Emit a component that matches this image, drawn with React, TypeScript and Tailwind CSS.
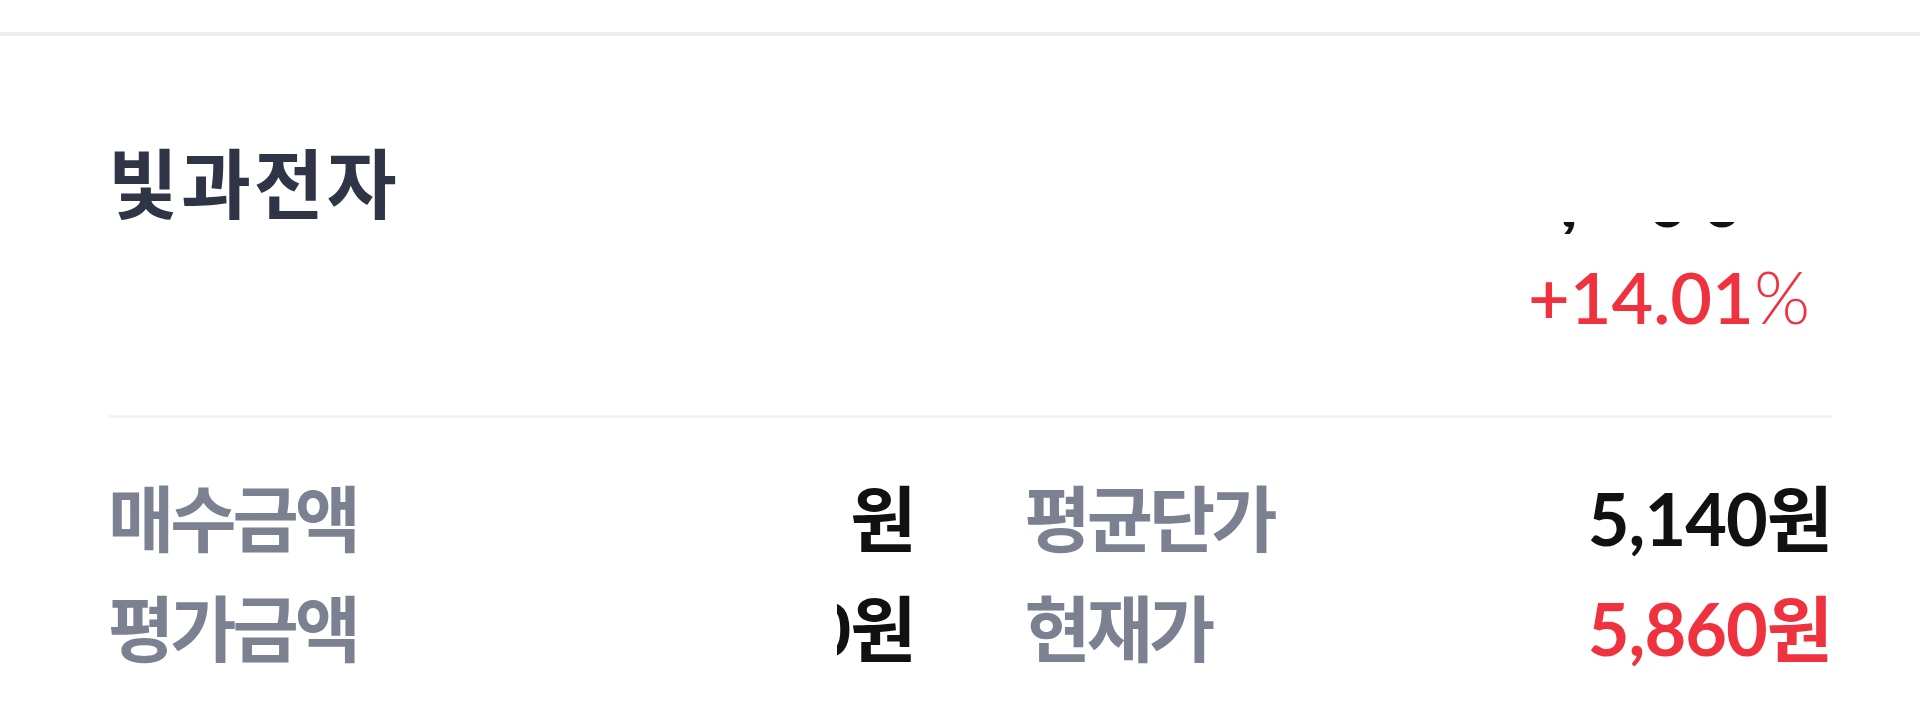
import { ReactNode } from 'react';

const rows = [
  [
    { label: '매수금액', value: '1,028,000원', clip: 'w-[64px]' },
    { label: '평균단가', value: '5,140원', clip: '' },
  ],
  [
    { label: '평가금액', value: '1,172,000원', clip: 'w-[79px]' },
    { label: '현재가', value: '5,860원', clip: '', red: true },
  ],
];

export default function App() {
  return (
    <div className="min-h-screen bg-white font-['Lato','Noto_Sans_CJK_KR',sans-serif]">
      <div className="h-[32px]" />
      <div className="h-[4px] bg-[#eeeeef]" />

      <section className="pl-[108px] pr-[88px]">
        <div className="flex items-start justify-between pt-[106px]">
          <h1 className="mt-[4px] text-[76px] font-bold leading-none tracking-[3px] text-[#2f3547]">
            빛과전자
          </h1>

          <div className="flex flex-col items-end pr-[22px]">
            {/* 가려진 평가손익 줄: 글자 아랫부분만 보임 */}
            <div className="mt-[80px] h-[12px] overflow-hidden pr-[67px]">
              <div className="-mt-[55px] flex text-[72px] font-bold leading-[64px] text-[#111111]">
                <span>,</span>
                <span className="ml-[69px]">0</span>
                <span className="ml-[13px]">0</span>
              </div>
            </div>
            <p className="mt-[26px] text-[72px] font-semibold leading-none text-[#f0323f]">
              +14.01<span className="font-light">%</span>
            </p>
          </div>
        </div>

        <div className="mt-[83px] h-[3px] bg-[#f4f4f5]" />

        <div className="mt-[64px] flex flex-col gap-[38px]">
          {rows.map((row, i) => (
            <div key={i} className="grid grid-cols-2 gap-x-[109px]">
              {row.map((cell) => (
                <Cell key={cell.label} label={cell.label} red={cell.red}>
                  {cell.clip ? (
                    <span className={`flex justify-end overflow-hidden whitespace-nowrap ${cell.clip}`}>
                      {cell.value}
                    </span>
                  ) : (
                    cell.value
                  )}
                </Cell>
              ))}
            </div>
          ))}
        </div>
      </section>
    </div>
  );
}

function Cell({ label, red, children }: { label: string; red?: boolean; children: ReactNode }) {
  return (
    <div className="flex items-baseline justify-between text-[72px] leading-none">
      <span className="font-bold tracking-[-4px] text-[#7b8190]">{label}</span>
      <span className={`font-bold tracking-[-1px] ${red ? 'text-[#f0323f]' : 'text-[#111111]'}`}>
        {children}
      </span>
    </div>
  );
}
